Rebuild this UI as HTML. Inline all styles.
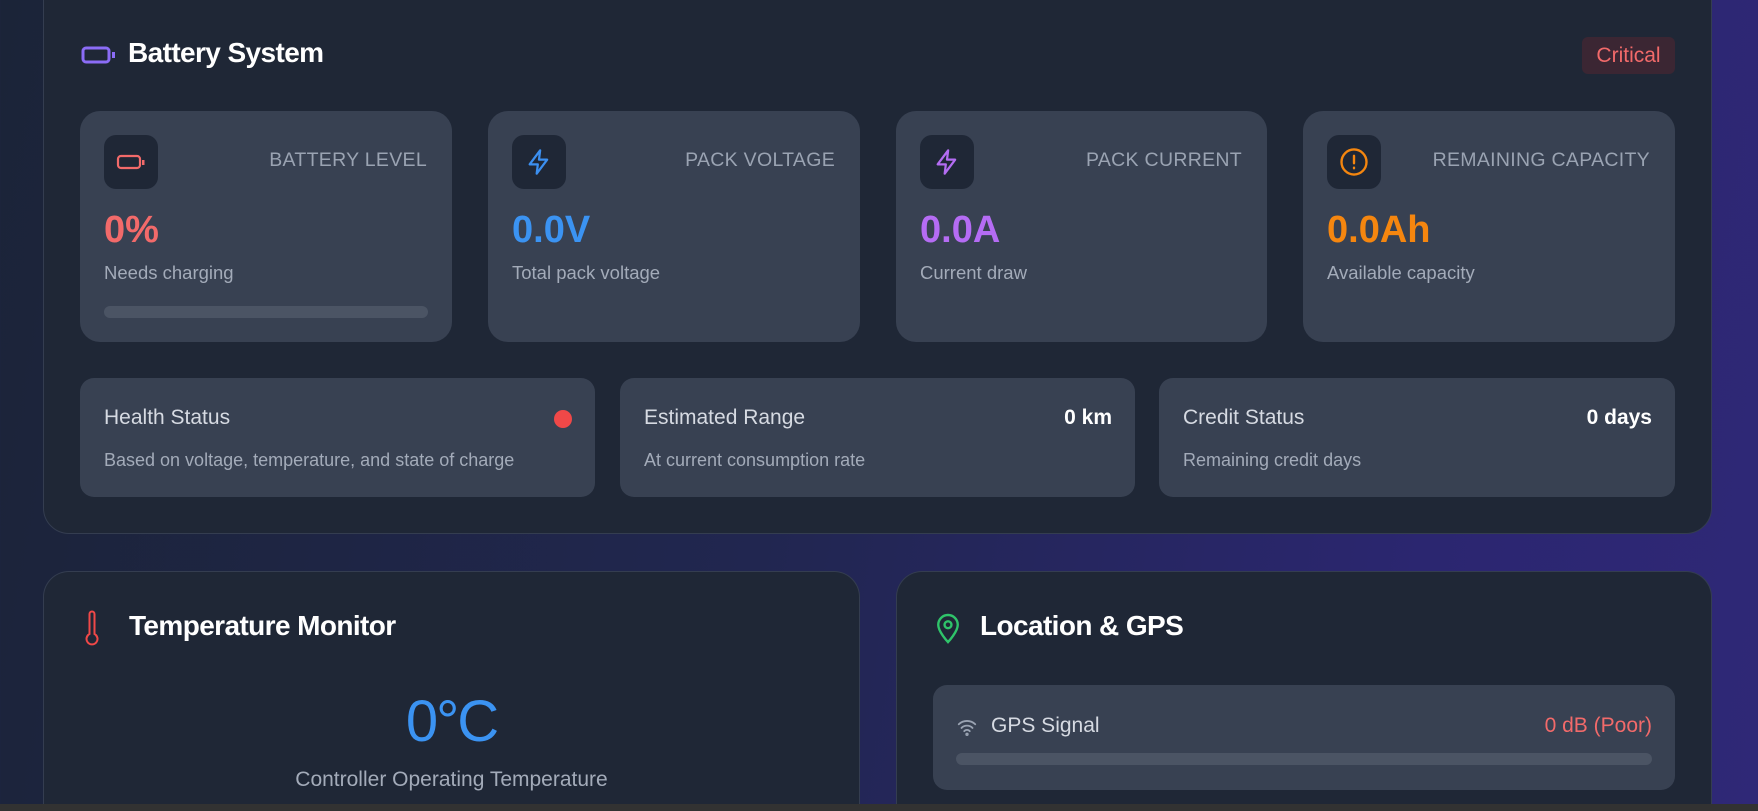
<!DOCTYPE html>
<html style="height:811px;overflow:hidden"><head><meta charset="utf-8"><style>
*{box-sizing:border-box;margin:0;padding:0}
body{width:1758px;height:811px;overflow:hidden;position:relative;font-family:"Liberation Sans",Arial,sans-serif;background:linear-gradient(100deg,#1b2438 0%,#212650 45%,#2b2670 80%,#2f2877 100%)}
.panel{position:absolute;background:#1f2736;border:1px solid #343d50;border-radius:26px}
.card{position:absolute;background:#384152;border-radius:20px}
.ib{position:absolute;left:24px;top:24px;width:54px;height:54px;border-radius:12px;background:#1f2736;display:flex;align-items:center;justify-content:center}
.lbl{position:absolute;right:25px;top:38px;font-size:19.5px;color:#9aa3b2;letter-spacing:.3px}
.val{position:absolute;left:24px;top:97px;font-size:38px;font-weight:bold;line-height:44px}
.sub{position:absolute;left:24px;top:151px;font-size:18.5px;color:#a3abb9}
.bar{position:absolute;left:24px;right:24px;top:195px;height:12px;border-radius:6px;background:#4b5464}
.title{position:absolute;font-size:28px;font-weight:bold;color:#fff;letter-spacing:-.6px}
.s2{position:absolute;background:#384152;border-radius:14px;top:378px;height:119px}
.s2 .h{position:absolute;left:24px;top:28px;font-size:21px;color:#d6dae2}
.s2 .d{position:absolute;left:24px;top:72px;font-size:18px;color:#a3abb9}
.s2 .r{position:absolute;right:23px;top:28px;font-size:21px;color:#fff;font-weight:bold}
</style></head><body>
<div class="panel" style="left:43px;top:-30px;width:1669px;height:564px"></div>
<svg style="position:absolute;left:81px;top:45px" width="36" height="20" viewBox="0 0 36 20"><rect x="2" y="3" width="26" height="14" rx="3" fill="none" stroke="#8b6cf6" stroke-width="3"/><rect x="31" y="7" width="3" height="6" fill="#8b6cf6"/></svg>
<div class="title" style="left:128px;top:37px">Battery System</div>
<div style="position:absolute;left:1582px;top:37px;width:93px;height:37px;border-radius:6px;background:#3b2633;color:#f26a6a;font-size:21px;text-align:center;line-height:37px">Critical</div>

<div class="card" style="left:80px;top:111px;width:372px;height:231px">
<div class="ib"><svg width="30" height="20" viewBox="0 0 30 20"><rect x="2" y="4" width="22" height="12" rx="3" fill="none" stroke="#f26a6a" stroke-width="2.2"/><rect x="26" y="8" width="2.5" height="5" fill="#f26a6a"/></svg></div>
<div class="lbl">BATTERY LEVEL</div><div class="val" style="color:#f26a6a">0%</div><div class="sub">Needs charging</div><div class="bar"></div></div>
<div class="card" style="left:488px;top:111px;width:372px;height:231px">
<div class="ib"><svg width="28" height="30" viewBox="0 0 24 24" fill="none" stroke="#3b8ff0" stroke-width="1.9" stroke-linejoin="round"><path d="M13 2L4 14h7l-1 8 9-12h-7l1-8z"/></svg></div>
<div class="lbl">PACK VOLTAGE</div><div class="val" style="color:#3b93f2">0.0V</div><div class="sub">Total pack voltage</div></div>
<div class="card" style="left:896px;top:111px;width:371px;height:231px">
<div class="ib"><svg width="28" height="30" viewBox="0 0 24 24" fill="none" stroke="#b36cf2" stroke-width="1.9" stroke-linejoin="round"><path d="M13 2L4 14h7l-1 8 9-12h-7l1-8z"/></svg></div>
<div class="lbl">PACK CURRENT</div><div class="val" style="color:#b56cf4">0.0A</div><div class="sub">Current draw</div></div>
<div class="card" style="left:1303px;top:111px;width:372px;height:231px">
<div class="ib"><svg width="30" height="30" viewBox="0 0 24 24" fill="none" stroke="#f5860f" stroke-width="1.9" stroke-linecap="round"><circle cx="12" cy="12" r="10"/><path d="M12 7v6M12 16.5v.5"/></svg></div>
<div class="lbl">REMAINING CAPACITY</div><div class="val" style="color:#f5860f">0.0Ah</div><div class="sub">Available capacity</div></div>

<div class="s2" style="left:80px;width:515px"><div class="h">Health Status</div><div class="d">Based on voltage, temperature, and state of charge</div><div style="position:absolute;right:23px;top:32px;width:18px;height:18px;border-radius:50%;background:#f04848"></div></div>
<div class="s2" style="left:620px;width:515px"><div class="h">Estimated Range</div><div class="d">At current consumption rate</div><div class="r">0 km</div></div>
<div class="s2" style="left:1159px;width:516px"><div class="h">Credit Status</div><div class="d">Remaining credit days</div><div class="r">0 days</div></div>

<div class="panel" style="left:43px;top:571px;width:817px;height:260px;border-bottom:none;border-radius:26px 26px 0 0">
<svg style="position:absolute;left:41px;top:38px" width="14" height="36" viewBox="0 0 14 36" fill="none" stroke="#f04848" stroke-width="2"><path d="M4.5 24V4a2.5 2.5 0 015 0v20a5.5 5.5 0 11-5 0z"/></svg>
<div class="title" style="left:85px;top:38px">Temperature Monitor</div>
<div style="position:absolute;left:0;width:815px;top:116px;text-align:center;font-size:58px;color:#3b93f2;letter-spacing:-2px">0°C</div>
<div style="position:absolute;left:0;width:815px;top:196px;text-align:center;font-size:21px;color:#a3abb9">Controller Operating Temperature</div>
</div>
<div class="panel" style="left:896px;top:571px;width:816px;height:260px;border-bottom:none;border-radius:26px 26px 0 0">
<svg style="position:absolute;left:38px;top:39px" width="26" height="34" viewBox="0 0 24 30" fill="none" stroke="#2fc46a" stroke-width="2.2"><path d="M12 28s-9-9.5-9-16a9 9 0 0118 0c0 6.5-9 16-9 16z"/><circle cx="12" cy="12" r="3.2"/></svg>
<div class="title" style="left:83px;top:38px">Location &amp; GPS</div>
<div class="card" style="left:36px;top:113px;width:742px;height:105px;border-radius:14px">
<svg style="position:absolute;left:23px;top:31px" width="22" height="22" viewBox="0 0 24 24" fill="none" stroke="#9aa3b2" stroke-width="2" stroke-linecap="round"><path d="M3 9a13 13 0 0118 0M6 13a8.5 8.5 0 0112 0M9 16.5a4 4 0 016 0"/><circle cx="12" cy="20" r=".8"/></svg>
<div style="position:absolute;left:58px;top:29px;font-size:21px;color:#d6dae2">GPS Signal</div>
<div style="position:absolute;right:23px;top:29px;font-size:21px;color:#f26a6a">0 dB (Poor)</div>
<div style="position:absolute;left:23px;right:23px;top:68px;height:12px;border-radius:6px;background:#4b5464"></div>
</div></div>
<div style="position:absolute;left:0;top:804px;width:1758px;height:7px;background:#323232"></div>
</body></html>
